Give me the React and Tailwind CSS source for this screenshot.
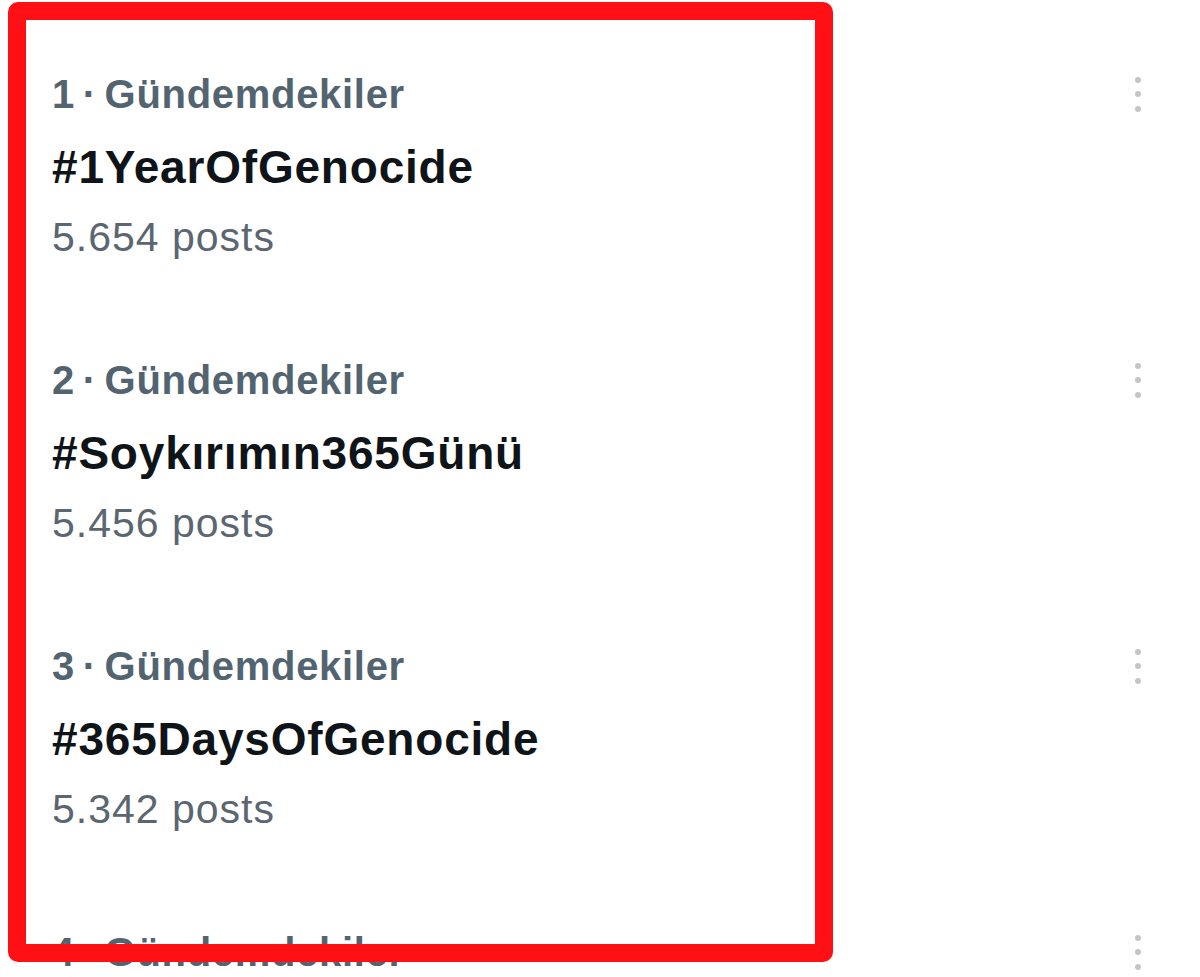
import React from "react";

const trends = [
  { rank: 1, tag: "#1YearOfGenocide", posts: "5.654 posts" },
  { rank: 2, tag: "#Soykırımın365Günü", posts: "5.456 posts" },
  { rank: 3, tag: "#365DaysOfGenocide", posts: "5.342 posts" },
  { rank: 4, tag: "#Filistin", posts: "5.100 posts" },
];

function Dots() {
  return (
    <div className="flex flex-col items-center gap-[8.5px]">
      <span className="block w-[6px] h-[6px] rounded-full bg-[#c3c6c9]" />
      <span className="block w-[6px] h-[6px] rounded-full bg-[#c3c6c9]" />
      <span className="block w-[6px] h-[6px] rounded-full bg-[#c3c6c9]" />
    </div>
  );
}

function Trend({ rank, tag, posts }) {
  return (
    <div className="h-[286px] shrink-0 pl-[52px] pr-[59px]">
      <div className="flex items-center justify-between h-[48px]">
        <div className="text-[40px] leading-[48px] font-bold tracking-[0.7px] [word-spacing:-4px] text-[#536471] whitespace-nowrap">
          {rank} · Gündemdekiler
        </div>
        <Dots />
      </div>
      <div className="mt-[21px] text-[46px] leading-[56px] font-bold tracking-[0.8px] text-[#0f1419] whitespace-nowrap">
        {tag}
      </div>
      <div className="mt-[16px] text-[41px] leading-[52px] tracking-[1px] text-[#5b6670] whitespace-nowrap">
        {posts}
      </div>
    </div>
  );
}

export default function App() {
  return (
    <div
      className="relative w-[1200px] h-[977px] overflow-hidden bg-white"
      style={{ fontFamily: '"Liberation Sans", Arial, sans-serif' }}
    >
      <div className="flex flex-col pt-[70px]">
        {trends.map((t) => (
          <Trend key={t.rank} {...t} />
        ))}
      </div>
      <div className="absolute left-[8px] top-[2px] w-[825px] h-[960px] border-[18px] border-[#fe1014] rounded-[10px] pointer-events-none" />
    </div>
  );
}
